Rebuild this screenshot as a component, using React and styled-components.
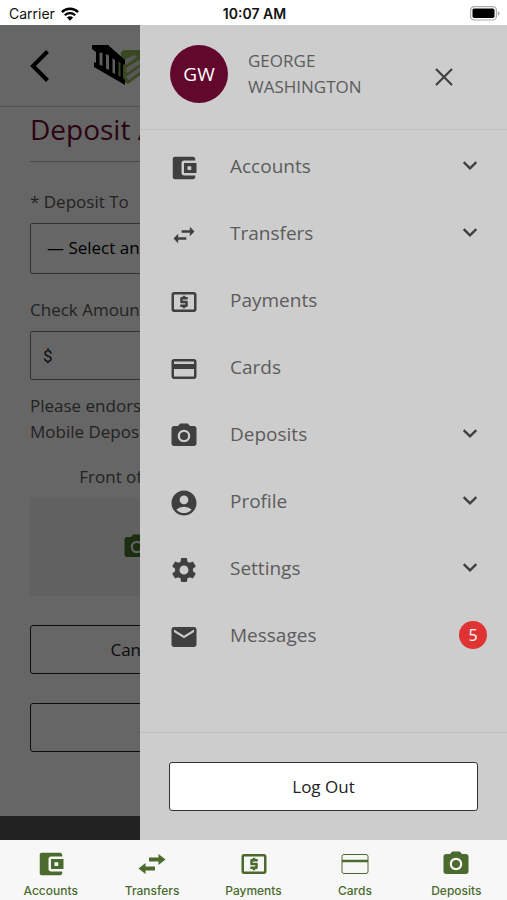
import styled, { createGlobalStyle } from "styled-components";
import { useState } from "react";
import {
  MdAccountCircle,
  MdCameraAlt,
  MdCreditCard,
  MdEmail,
  MdLocalAtm,
  MdSettings,
  MdSwapHoriz,
} from "react-icons/md";

function WalletIcon({ size = 30 }) {
  return (
    <svg width={size} height={size} viewBox="0 0 24 24" fill="currentColor" aria-hidden="true">
      <path d="M21 18v1.200c0 1-.8 1.800-1.800 1.800H4.600C3.700 21 3 20.300 3 19.400V4.600C3 3.700 3.700 3 4.600 3h14.600c1 0 1.800.8 1.800 1.800V6h-9c-1.100 0-2 .9-2 2v8c0 1.100.9 2 2 2h9z" />
      <path fillRule="evenodd" d="M12 8h10v8H12V8zm2.800 2.500v3h3v-3h-3z" />
    </svg>
  );
}

function ArrowsIcon() {
  return (
    <svg width="28" height="30" viewBox="0 0 28 30" fill="currentColor" aria-hidden="true">
      <path d="M11 8.500h9.500V5l7 5.500-7 5.500v-3.500H11zM17 17.500H7.500V14l-7 5.500 7 5.500v-3.500H17z" />
    </svg>
  );
}

function ThinCardIcon() {
  return (
    <svg width="28" height="30" viewBox="0 0 28 30" fill="none" stroke="currentColor" aria-hidden="true">
      <rect x="1" y="5.500" width="26" height="19" rx="2" />
      <path d="M1 12h26" strokeWidth="2.500" />
    </svg>
  );
}

function ChevronDown() {
  return (
    <svg width="16" height="12" viewBox="0 0 16 12" fill="none" stroke="currentColor" aria-hidden="true">
      <path d="M1.700 2.200 8 8.300l6.300-6.100" strokeWidth="2.400" />
    </svg>
  );
}

function WifiIcon() {
  return (
    <svg width="18" height="14" viewBox="0 0 18 14" fill="none" stroke="#000" aria-hidden="true">
      <path d="M.9 5.100a11.600 11.600 0 0 1 16.200 0" strokeWidth="2.400" />
      <path d="M3.800 8.300a7.400 7.400 0 0 1 10.400 0" strokeWidth="2.300" />
      <path d="M9 13.800 5.900 10.600a4.500 4.500 0 0 1 6.200 0z" fill="#000" stroke="none" />
    </svg>
  );
}

function BatteryIcon() {
  return (
    <svg width="30" height="15" viewBox="0 0 30 15" aria-hidden="true">
      <rect x=".6" y=".6" width="25.800" height="13.400" rx="3.600" fill="#fff" stroke="#aaa" strokeWidth="1.200" />
      <rect x="2.500" y="2.500" width="22" height="9.600" rx="1.800" fill="#000" />
      <path d="M27.800 5c2.400.9 2.400 3.900 0 4.800z" fill="#aaa" />
    </svg>
  );
}

function BankLogo() {
  return (
    <svg width="62" height="44" viewBox="0 0 62 44" role="img" aria-label="Bank">
      <path d="M29 8l3-2h28L55 26 36 40l-8-5z" fill="#8fb556" />
      <path d="M32 16l10-5 3 2-11 8zM34 24l13-8 4 2-16 11zM34 33l17-12 3 2-17 13z" fill="#ddd" />
      <path d="M0 1h16l17 15v4l-2 1v13l2 2v5L2 23v-5l2 1V8L0 5z" />
      <path d="M7.500 8.500v12l3 1.500V9zM14 10v14.500l3 1.500V11.500zM20.500 14v14.500l2.500 1.500V16z" fill="#eee" />
      <path d="M26.500 17.500v14.500l2 1V19z" fill="#8fb556" />
    </svg>
  );
}

const menuItems = [
  { name: "Accounts", icon: <WalletIcon />, expands: true },
  { name: "Transfers", icon: <MdSwapHoriz size={28} />, expands: true },
  { name: "Payments", icon: <MdLocalAtm size={30} /> },
  { name: "Cards", icon: <MdCreditCard size={30} /> },
  { name: "Deposits", icon: <MdCameraAlt size={30} />, expands: true },
  { name: "Profile", icon: <MdAccountCircle size={30} />, expands: true },
  { name: "Settings", icon: <MdSettings size={30} />, expands: true },
  { name: "Messages", icon: <MdEmail size={30} />, count: 5 },
];

const tabs = [
  { name: "Accounts", icon: <WalletIcon /> },
  { name: "Transfers", icon: <ArrowsIcon /> },
  { name: "Payments", icon: <MdLocalAtm size={30} /> },
  { name: "Cards", icon: <ThinCardIcon /> },
  { name: "Deposits", icon: <MdCameraAlt size={30} /> },
];

function DepositForm() {
  const [amount, setAmount] = useState("");

  return (
    <Form onSubmit={(e) => e.preventDefault()}>
      <Title>Deposit A Check</Title>
      <Label htmlFor="account">* Deposit To</Label>
      <AccountSelect id="account">
        <option>— Select an Account —</option>
      </AccountSelect>
      <Label htmlFor="amount">Check Amount</Label>
      <AmountBox>
        <Currency>$</Currency>
        <AmountInput
          id="amount"
          type="text"
          value={amount}
          onChange={(e) => setAmount(e.target.value)}
        />
      </AmountBox>
      <Hint>
        Please endorse
        <br />
        Mobile Deposit
      </Hint>
      <Columns>
        <Caption>Front of Check</Caption>
        <Caption>Back of Check</Caption>
        <PhotoBtn type="button" aria-label="Front of Check">
          <MdCameraAlt size={30} />
        </PhotoBtn>
        <PhotoBtn type="button" aria-label="Back of Check">
          <MdCameraAlt size={30} />
        </PhotoBtn>
      </Columns>
      <Columns>
        <OutlineBtn type="button">Cancel</OutlineBtn>
        <OutlineBtn type="submit">Submit</OutlineBtn>
      </Columns>
      <OutlineBtn type="button">Deposit History</OutlineBtn>
    </Form>
  );
}

function Drawer({ onClose }) {
  return (
    <DrawerPanel>
      <DrawerHeader>
        <Avatar>GW</Avatar>
        <UserName>
          GEORGE
          <br />
          WASHINGTON
        </UserName>
        <CloseBtn onClick={onClose} aria-label="Close menu">
          <svg width="18" height="18" viewBox="0 0 18 18" stroke="currentColor" strokeWidth="2.200">
            <path d="M1 1l16 16M17 1 1 17" />
          </svg>
        </CloseBtn>
      </DrawerHeader>
      <Menu>
        {menuItems.map(({ name, icon, expands, count }) => (
          <MenuBtn key={name}>
            <IconCell>{icon}</IconCell>
            <MenuText>{name}</MenuText>
            {expands && <ChevronDown />}
            {count && <Count>{count}</Count>}
          </MenuBtn>
        ))}
      </Menu>
      <DrawerFooter>
        <OutlineBtn $filled>Log Out</OutlineBtn>
      </DrawerFooter>
    </DrawerPanel>
  );
}

function App() {
  const [isOpen, setIsOpen] = useState(true);

  return (
    <Screen>
      <GlobalStyle />
      <StatusBar>
        <Carrier>
          Carrier
          <WifiIcon />
        </Carrier>
        <Time>10:07 AM</Time>
        <Battery>
          <BatteryIcon />
        </Battery>
      </StatusBar>
      <Main>
        <PageHeader>
          <BackBtn aria-label="Back" onClick={() => setIsOpen(true)}>
            <svg width="20" height="32" viewBox="0 0 20 32" fill="none" stroke="#000" strokeWidth="4">
              <path d="M17.500 1.500 3 16l14.500 14.500" />
            </svg>
          </BackBtn>
          <BankLogo />
        </PageHeader>
        <DepositForm />
        <PageFooter />
        {isOpen && (
          <Backdrop>
            <Drawer onClose={() => setIsOpen(false)} />
          </Backdrop>
        )}
      </Main>
      <TabBar>
        {tabs.map(({ name, icon }) => (
          <Tab key={name} href={`#${name.toLowerCase()}`}>
            {icon}
            {name}
          </Tab>
        ))}
      </TabBar>
    </Screen>
  );
}
export default App;

const GlobalStyle = createGlobalStyle`
  * {
    box-sizing: border-box;
  }

  body {
    margin: 0;
    background-color: #fff;
    font-family: "Open Sans", "Noto Sans", sans-serif;
  }

  button, input, select {
    font-family: inherit;
  }

  svg {
    display: block;
    flex-shrink: 0;
  }
`;

const Screen = styled.div`
  display: flex;
  flex-direction: column;
  min-height: 100vh;
`;

const StatusBar = styled.div`
  display: grid;
  grid-template-columns: 1fr auto 1fr;
  align-items: center;
  height: 25px;
  padding: 2px 7px 0 9px;
  font-family: Inter, "Liberation Sans", sans-serif;
  font-size: 14px;
  line-height: 20px;
  color: #111;
`;

const Carrier = styled.div`
  display: flex;
  align-items: center;
  gap: 6px;
`;

const Time = styled.div`
  font-weight: 600;
`;

const Battery = styled.div`
  justify-self: end;
`;

const Main = styled.main`
  display: flex;
  flex-direction: column;
  flex: 1;
  position: relative;
`;

const PageHeader = styled.header`
  display: flex;
  align-items: center;
  gap: 42px;
  height: 82px;
  padding: 0 30px;
  border-bottom: 1px solid #ccc;
`;

const BackBtn = styled.button`
  display: flex;
  padding: 0;
  border: none;
  background-color: transparent;
  cursor: pointer;
`;

const Form = styled.form`
  display: flex;
  flex-direction: column;
  flex: 1;
  padding: 0 30px;
`;

const Title = styled.h1`
  margin: 0 0 27px;
  padding: 3px 0 13px;
  border-bottom: 1px solid #bbb;
  font-size: 28px;
  font-weight: 400;
  line-height: 38px;
  color: #6b0a32;
`;

const Label = styled.label`
  margin-bottom: 8px;
  font-size: 17px;
  line-height: 26px;
  color: #555;
`;

const AccountSelect = styled.select`
  appearance: none;
  height: 51px;
  margin-bottom: 23px;
  padding: 0 16px 2px;
  border: 1px solid #808080;
  border-radius: 2px;
  background-color: transparent;
  font-size: 17px;
  color: #000;
`;

const AmountBox = styled.div`
  display: flex;
  align-items: center;
  gap: 8px;
  height: 49px;
  padding: 0 12px;
  border: 1px solid #808080;
  border-radius: 2px;
`;

const Currency = styled.span`
  font-family: Roboto, sans-serif;
  font-size: 17px;
  color: #222;
`;

const AmountInput = styled.input`
  flex: 1;
  min-width: 0;
  border: none;
  background-color: transparent;
  font-size: 17px;
`;

const Hint = styled.p`
  margin: 13px 0 19px;
  font-size: 17px;
  line-height: 26px;
  color: #555;
`;

const Columns = styled.div`
  display: grid;
  grid-template-columns: 1fr 1fr;
  column-gap: 20px;
  row-gap: 8px;
  margin-bottom: 29px;
`;

const Caption = styled.div`
  font-size: 17px;
  line-height: 26px;
  text-align: center;
  color: #555;
`;

const PhotoBtn = styled.button`
  display: flex;
  align-items: center;
  justify-content: center;
  height: 98px;
  border: none;
  background-color: #f3f3f3;
  color: #46732a;
  cursor: pointer;
`;

const OutlineBtn = styled.button`
  width: 100%;
  height: 49px;
  border: 1px solid ${({ $filled }) => ($filled ? "#333" : "#222")};
  border-radius: 3px;
  background-color: ${({ $filled }) => ($filled ? "#fff" : "transparent")};
  font-size: 17px;
  color: #222;
  cursor: pointer;
`;

const PageFooter = styled.footer`
  height: 24px;
  background-color: #555;
`;

const Backdrop = styled.div`
  position: absolute;
  inset: 0;
  display: flex;
  padding-left: 140px;
  background-color: rgba(0, 0, 0, 0.6);
`;

const DrawerPanel = styled.aside`
  display: flex;
  flex-direction: column;
  flex: 1;
  background-color: #cdcdcd;
  color: #3f3f3f;
`;

const DrawerHeader = styled.div`
  display: flex;
  align-items: center;
  height: 105px;
  padding: 0 54px 6px 30px;
  border-bottom: 1px solid #c0c0c0;
`;

const Avatar = styled.div`
  display: flex;
  align-items: center;
  justify-content: center;
  width: 58px;
  height: 58px;
  border-radius: 50%;
  background-color: #62082c;
  font-size: 19px;
  color: #fff;
`;

const UserName = styled.div`
  flex: 1;
  margin-left: 20px;
  font-size: 17px;
  line-height: 26px;
  color: #5c5c5c;
`;

const CloseBtn = styled.button`
  display: flex;
  padding: 6px 0 0;
  border: none;
  background-color: transparent;
  color: inherit;
  cursor: pointer;
`;

const Menu = styled.nav`
  display: flex;
  flex-direction: column;
  flex: 1;
  padding: 2px 0;
`;

const MenuBtn = styled.button`
  display: flex;
  align-items: center;
  height: 67px;
  padding: 0 29px;
  border: none;
  background-color: transparent;
  color: inherit;
  cursor: pointer;
`;

const IconCell = styled.span`
  display: flex;
  justify-content: center;
  width: 30px;
  padding-top: 4px;
`;

const MenuText = styled.span`
  flex: 1;
  margin-left: 31px;
  font-size: 19px;
  line-height: 28px;
  text-align: left;
  color: #5c5c5c;
`;

const Count = styled.span`
  width: 28px;
  margin-right: -9px;
  border-radius: 50%;
  background-color: #e03434;
  font-size: 16px;
  line-height: 28px;
  text-align: center;
  color: #fff;
`;

const DrawerFooter = styled.div`
  padding: 29px;
  border-top: 1px solid #c0c0c0;
`;

const TabBar = styled.nav`
  display: flex;
  height: 60px;
  padding-top: 9px;
  background-color: #f7f7f7;
`;

const Tab = styled.a`
  display: flex;
  flex-direction: column;
  align-items: center;
  flex: 1;
  gap: 4px;
  font-family: Inter, "Liberation Sans", sans-serif;
  font-size: 12px;
  font-weight: 500;
  line-height: 16px;
  text-decoration: none;
  color: #4a6b2d;
`;
